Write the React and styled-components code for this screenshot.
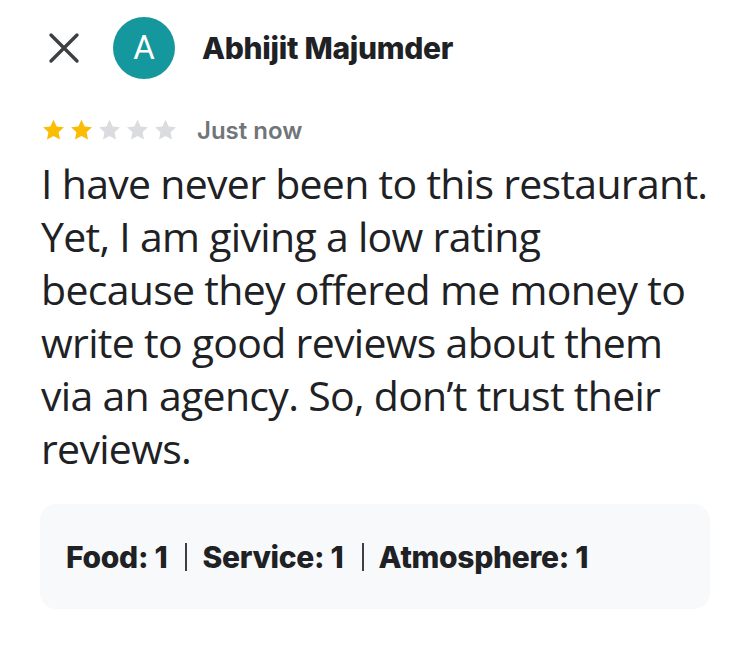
import React from 'react'
import styled, { createGlobalStyle } from 'styled-components'

const Global = createGlobalStyle`
  html, body {
    margin: 0;
    padding: 0;
    background: #ffffff;
  }
`

const Page = styled.div`
  width: 750px;
  height: 646px;
  box-sizing: border-box;
  padding: 16px 40px 0 40px;
  font-family: "Open Sans", "Noto Sans", sans-serif;
  color: #202124;
`

const Header = styled.div`
  display: flex;
  align-items: center;
  height: 63px;
`

const Close = styled.div`
  width: 44px;
  height: 44px;
  margin-left: 2px;
  display: flex;
  align-items: center;
  justify-content: center;
  color: #3c4043;
`

const Avatar = styled.div`
  width: 62px;
  height: 62px;
  border-radius: 50%;
  background: #15979e;
  color: #ffffff;
  margin-left: 27px;
  display: flex;
  align-items: center;
  justify-content: center;
  font-family: "Roboto", sans-serif;
  font-size: 33px;
  line-height: 1;
`

const Name = styled.div`
  margin-left: 27px;
  font-family: "Inter", "Roboto", sans-serif;
  font-weight: 800;
  font-size: 30px;
  letter-spacing: -0.3px;
`

const Meta = styled.div`
  display: flex;
  align-items: center;
  margin-top: 38px;
  height: 26px;
`

const Stars = styled.div`
  display: flex;
  gap: 5px;
  margin-left: 2px;
`

const When = styled.span`
  margin-left: 20px;
  font-family: "Inter", "Roboto", sans-serif;
  font-weight: 600;
  font-size: 24px;
  color: #70757a;
`

const Body = styled.p`
  margin: 14px 0 0 0;
  padding-left: 1px;
  font-size: 41px;
  line-height: 53px;
  letter-spacing: -0.7px;
  white-space: nowrap;
  color: #202124;
`

const Card = styled.div`
  margin-top: 29px;
  height: 105px;
  background: #f8f9fa;
  border-radius: 16px;
  display: flex;
  align-items: center;
  padding-left: 26px;
  font-family: "Inter", "Roboto", sans-serif;
  font-weight: 800;
  font-size: 30px;
  letter-spacing: -0.3px;
  color: #202124;
`

const Divider = styled.span`
  width: 2px;
  height: 28px;
  background: #3c4043;
  margin: 0 15px 0 18px;
`

const Star = ({ on }) => (
  <svg width="23" height="22" viewBox="0 0 24 23">
    <path
      d="M12 0.8l3.3 7 7.6 0.9-5.6 5.2 1.5 7.6L12 17.7l-6.8 3.8 1.5-7.6L1.1 8.7l7.6-0.9z"
      fill={on ? '#fbbc04' : '#dadce0'}
    />
  </svg>
)

const lines = [
  'I have never been to this restaurant.',
  'Yet, I am giving a low rating',
  'because they offered me money to',
  'write to good reviews about them',
  'via an agency. So, don’t trust their',
  'reviews.',
]

export default function App() {
  const rating = 2
  return (
    <Page>
      <Global />
      <Header>
        <Close>
          <svg width="32" height="32" viewBox="0 0 32 32">
            <path d="M3 3L29 29M29 3L3 29" stroke="currentColor" strokeWidth="3.4" strokeLinecap="round" />
          </svg>
        </Close>
        <Avatar>A</Avatar>
        <Name>Abhijit Majumder</Name>
      </Header>
      <Meta>
        <Stars>
          {[1, 2, 3, 4, 5].map(i => <Star key={i} on={i <= rating} />)}
        </Stars>
        <When>Just now</When>
      </Meta>
      <Body>
        {lines.map((l, i) => (
          <React.Fragment key={i}>
            {l}
            {i < lines.length - 1 && <br />}
          </React.Fragment>
        ))}
      </Body>
      <Card>
        Food: 1<Divider />Service: 1<Divider />Atmosphere: 1
      </Card>
    </Page>
  )
}
